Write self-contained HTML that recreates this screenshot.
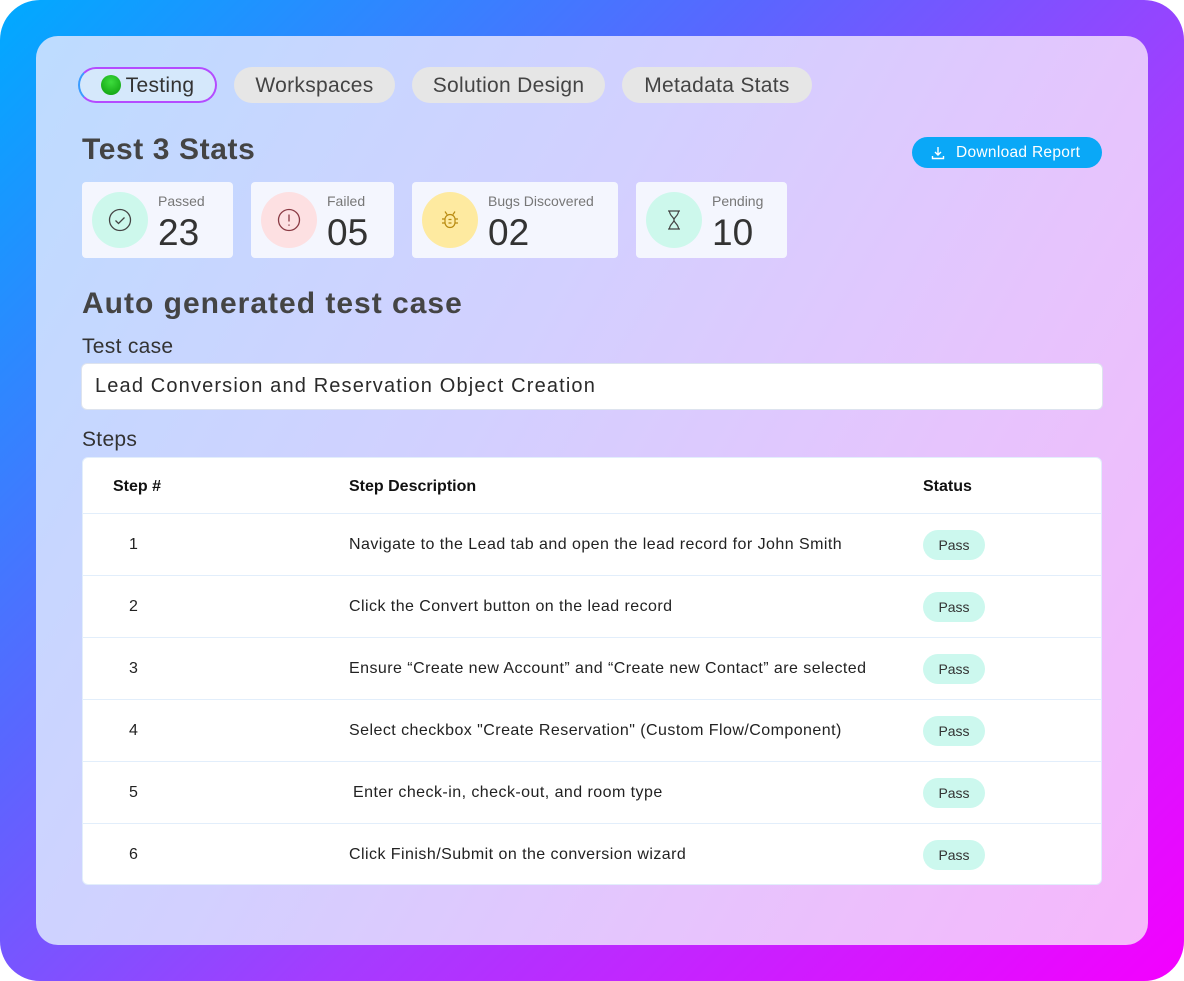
<!DOCTYPE html>
<html><head><meta charset="utf-8"><style>
*{margin:0;padding:0;box-sizing:border-box}
body{width:1184px;height:981px;background:#fff;font-family:"Liberation Sans",sans-serif;overflow:hidden;position:relative}
.outer{position:absolute;left:0;top:0;width:1184px;height:981px;border-radius:40px;background:linear-gradient(135deg,#00aaff 0%,#5a66ff 35%,#a43cff 60%,#f400ff 100%)}
.inner{position:absolute;left:36px;top:36px;width:1112px;height:909px;border-radius:22px;background:linear-gradient(120deg,#bddcff 0%,#d2d0ff 40%,#e6c4fd 70%,#f6b7fb 100%)}
.abs{position:absolute}
.tab{position:absolute;top:67px;height:36px;border-radius:18px;background:#e6e6e6;color:#444;font-size:21px;line-height:37px;text-align:center;letter-spacing:0.3px}
.card{position:absolute;top:182px;height:76px;background:#f4f6fe;border-radius:4px}
.circ{position:absolute;left:10px;top:10px;width:56px;height:56px;border-radius:50%}
.lbl{position:absolute;left:76px;top:11px;font-size:14px;color:#777}
.num{position:absolute;left:76px;top:30px;font-size:37px;color:#333}
h2{position:absolute;font-size:30px;color:#444;font-weight:bold}
.table{position:absolute;left:82px;top:457px;width:1020px;height:428px;background:#fff;border-radius:6px;border:1px solid #e2eefb}
.row{position:absolute;left:0;width:1018px;height:62px;border-top:1px solid #e2eefb;font-size:16px;color:#222}
.row span{position:absolute;top:22px;letter-spacing:0.45px}
.pill{position:absolute;left:840px;top:16px;width:62px;height:30px;border-radius:15px;background:#ccf8ee;font-size:14px;line-height:30px;text-align:center;color:#333}
</style></head><body>
<div class="outer"></div>
<div class="inner"></div>

<div class="tab" style="left:78px;width:139px;background:#d5e8fb;border:2px solid #b44cff;border-left-color:#3a9cff;line-height:33px;color:#333"><span style="display:inline-block;width:20px;height:20px;border-radius:50%;background:radial-gradient(circle at 50% 35%,#3ddc3d,#0a9a0a);vertical-align:-3px;margin-right:5px"></span>Testing</div>
<div class="tab" style="left:234px;width:161px">Workspaces</div>
<div class="tab" style="left:412px;width:193px">Solution Design</div>
<div class="tab" style="left:622px;width:190px">Metadata Stats</div>

<h2 style="left:82px;top:133px;letter-spacing:0.6px">Test 3 Stats</h2>
<div class="abs" style="left:912px;top:137px;width:190px;height:31px;border-radius:16px;background:#0aa8f7;color:#fff;font-size:15.5px;line-height:32px;padding-left:44px;letter-spacing:0.3px">Download Report
<svg class="abs" style="left:19px;top:9px" width="14" height="14" viewBox="0 0 14 14" fill="none" stroke="#fff" stroke-width="1.4"><path d="M7 1v8M4 6l3 3 3-3M1.5 10v2.5h11V10"/></svg></div>

<div class="card" style="left:82px;width:151px"><div class="circ" style="background:#cdf8ec"><svg width="56" height="56" viewBox="0 0 56 56" fill="none" stroke="#444" stroke-width="1.3"><circle cx="28" cy="28" r="10.5"/><path d="M23.5 28.5l3 3 6-6"/></svg></div><div class="lbl">Passed</div><div class="num">23</div></div>
<div class="card" style="left:251px;width:143px"><div class="circ" style="background:#fde0e2"><svg width="56" height="56" viewBox="0 0 56 56" fill="none" stroke="#8a3a44" stroke-width="1.3"><circle cx="28" cy="28" r="10.5"/><path d="M28 22.5v7M28 32.5v1.3"/></svg></div><div class="lbl">Failed</div><div class="num">05</div></div>
<div class="card" style="left:412px;width:206px"><div class="circ" style="background:#feeaa0"><svg width="56" height="56" viewBox="0 0 56 56" fill="none" stroke="#b88a10" stroke-width="1.2"><rect x="23" y="22.5" width="10" height="13" rx="5"/><path d="M25 22.5l-2-3M31 22.5l2-3M23 27h-3M33 27h3M23 31h-3M33 31h3M26.5 27.5h3M26.5 31h3"/></svg></div><div class="lbl">Bugs Discovered</div><div class="num">02</div></div>
<div class="card" style="left:636px;width:151px"><div class="circ" style="background:#cdf8ec"><svg width="56" height="56" viewBox="0 0 56 56" fill="none" stroke="#444" stroke-width="1.2"><path d="M22 19h12M22 37h12M23.5 19c0 5 4.5 6 4.5 9s-4.5 4-4.5 9M32.5 19c0 5-4.5 6-4.5 9s4.5 4 4.5 9"/></svg></div><div class="lbl">Pending</div><div class="num">10</div></div>

<h2 style="left:82px;top:287px;letter-spacing:1.0px">Auto generated test case</h2>
<div class="abs" style="left:82px;top:335px;font-size:21px;color:#333;letter-spacing:0.3px">Test case</div>
<div class="abs" style="left:81px;top:363px;width:1022px;height:47px;background:#fff;border:1px solid #dde3ee;border-radius:6px;font-size:20px;color:#2a2a2a;line-height:45px;padding-left:13px;letter-spacing:1.15px">Lead Conversion and Reservation Object Creation</div>
<div class="abs" style="left:82px;top:428px;font-size:21px;color:#333;letter-spacing:0.3px">Steps</div>

<div class="table">
<div class="abs" style="left:30px;top:20px;font-size:16px;font-weight:bold;color:#111">Step #</div>
<div class="abs" style="left:266px;top:20px;font-size:16px;font-weight:bold;color:#111">Step Description</div>
<div class="abs" style="left:840px;top:20px;font-size:16px;font-weight:bold;color:#111">Status</div>
<div class="row" style="top:55px"><span style="left:46px">1</span><span style="left:266px">Navigate to the Lead tab and open the lead record for John Smith</span><div class="pill">Pass</div></div>
<div class="row" style="top:117px"><span style="left:46px">2</span><span style="left:266px">Click the Convert button on the lead record</span><div class="pill">Pass</div></div>
<div class="row" style="top:179px"><span style="left:46px">3</span><span style="left:266px">Ensure “Create new Account” and “Create new Contact” are selected</span><div class="pill">Pass</div></div>
<div class="row" style="top:241px"><span style="left:46px">4</span><span style="left:266px">Select checkbox "Create Reservation" (Custom Flow/Component)</span><div class="pill">Pass</div></div>
<div class="row" style="top:303px"><span style="left:46px">5</span><span style="left:270px">Enter check-in, check-out, and room type</span><div class="pill">Pass</div></div>
<div class="row" style="top:365px"><span style="left:46px">6</span><span style="left:266px">Click Finish/Submit on the conversion wizard</span><div class="pill">Pass</div></div>
</div>
</body></html>
